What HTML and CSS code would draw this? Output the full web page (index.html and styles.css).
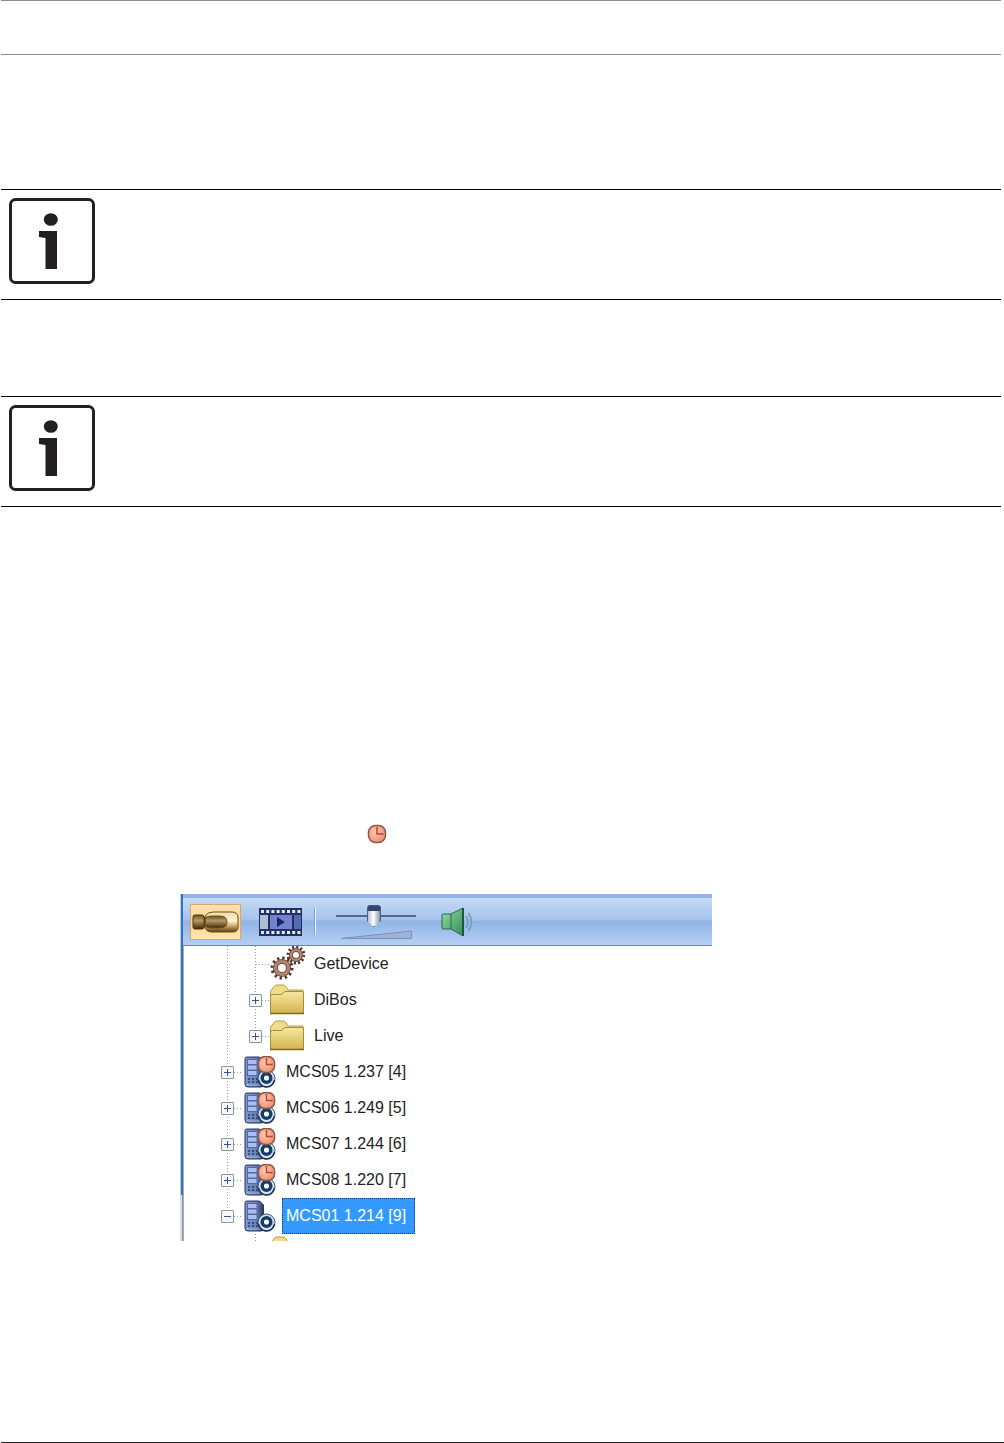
FILE: index.html
```html
<!DOCTYPE html>
<html lang="en">
<head>
    <meta charset="UTF-8">
    <meta name="viewport" content="width=device-width, initial-scale=1.0">
    <title>Device Tree</title>
<link rel="stylesheet" href="styles.css">
</head>
<body>

<!-- shared icons -->
<svg class="defs" width="0" height="0" aria-hidden="true">
    <defs>
        <linearGradient id="gold" x1="0" y1="0" x2="0" y2="1">
            <stop offset="0" stop-color="#f3dda6"/><stop offset=".45" stop-color="#fff3cf"/><stop offset=".7" stop-color="#c9a868"/><stop offset="1" stop-color="#5b3d10"/>
        </linearGradient>
        <linearGradient id="bronze" x1="0" y1="0" x2="0" y2="1">
            <stop offset="0" stop-color="#6d5126"/><stop offset=".4" stop-color="#b59a66"/><stop offset="1" stop-color="#3f2808"/>
        </linearGradient>
        <linearGradient id="yellow" x1="0" y1="0" x2="0" y2="1">
            <stop offset="0" stop-color="#f7e8a0"/><stop offset="1" stop-color="#d2b34e"/>
        </linearGradient>
        <linearGradient id="steel" x1="0" y1="0" x2="1" y2="0">
            <stop offset="0" stop-color="#8099cd"/><stop offset=".6" stop-color="#6b80b5"/><stop offset="1" stop-color="#26375f"/>
        </linearGradient>
        <linearGradient id="green" x1="0" y1="0" x2="1" y2="1">
            <stop offset="0" stop-color="#8fe0a3"/><stop offset="1" stop-color="#38885a"/>
        </linearGradient>
        <radialGradient id="red" cx=".4" cy=".4" r=".7">
            <stop offset="0" stop-color="#ffc9b2"/><stop offset="1" stop-color="#e58a6c"/>
        </radialGradient>
    </defs>
    <symbol id="info" viewBox="0 0 86 86">
        <rect x="1.5" y="1.5" width="83" height="83" rx="5" fill="#fff" stroke="#231f20" stroke-width="3"/>
        <ellipse cx="41.800" cy="21.500" rx="7" ry="6.300" fill="#231f20"/>
        <path d="M30 33h18v38H36.500V40L30 39z" fill="#231f20"/>
    </symbol>
    <symbol id="folder" viewBox="0 0 36 32">
        <path d="M1.500 29V7l4-5q1-1 2.500-1h6q2 0 3 2l2 3h14q1.500 0 1.500 1.500V29z" fill="#eedb8c" stroke="#b69c49"/>
        <path d="M1.500 29.500V12.500q0-2 2-2h9l3.500-3h17q1.500 0 1.500 1.500v20.500z" fill="url(#yellow)" stroke="#a88c39"/>
        <path d="M1 29.500h34" stroke="#7f6726" stroke-width="1.500"/>
    </symbol>
    <symbol id="clock" viewBox="0 0 20 20">
        <rect x="1.500" y="1.500" width="17" height="17" rx="7" fill="url(#red)" stroke="#8f5846" stroke-width="1.500"/>
        <path d="M10 3V10h6.500" fill="none" stroke="#c0402a" stroke-width="1.500"/>
    </symbol>
    <symbol id="server" viewBox="0 0 32 32">
        <path d="M1 28V3q0-2 2-2h12.500l4 4v24q-.5 2-2.500 2H4q-3 0-3-3z" fill="url(#steel)" stroke="#26355c"/>
        <path d="M3 3h10.500v17H3z" fill="#536aa6"/>
        <path d="M4 4h8.500v4H4zm0 5.500h8.500v4H4zm0 5.500h8.500v4H4z" fill="#aabff0"/>
        <path d="M4 23h2m2 0h2m2 0h2M4 26h2m2 0h2m2 0h2" stroke="#263b73" stroke-width="1.500"/>
        <path d="M2 29h15" stroke="#a4b9e6"/>
        <circle cx="22.500" cy="22.500" r="8.500" fill="#d4e0ec" stroke="#34506e"/>
        <path d="M14.500 24q2 7 8 7t8-7" fill="none" stroke="#1d3450" stroke-width="1.500"/>
        <circle cx="22.500" cy="22" r="4.300" fill="#fff" stroke="#173d67" stroke-width="3.500"/>
    </symbol>
    <symbol id="server-clock" viewBox="0 0 32 32">
        <use href="#server" width="32" height="32"/>
        <use href="#clock" x="13" y="-1" width="19" height="19"/>
    </symbol>
    <symbol id="gears" viewBox="0 0 36 36">
        <circle cx="13" cy="22" r="10" fill="none" stroke="#4a2e25" stroke-width="3" stroke-dasharray="2.300 2.930"/>
        <circle cx="13" cy="22" r="6.500" fill="none" stroke="#71493b" stroke-width="5"/>
        <circle cx="13" cy="22" r="6.500" fill="none" stroke="#b08673" stroke-width="3"/>
        <circle cx="27" cy="9" r="8" fill="none" stroke="#4a2e25" stroke-width="3" stroke-dasharray="2 2.190"/>
        <circle cx="27" cy="9" r="5" fill="none" stroke="#71493b" stroke-width="4"/>
        <circle cx="27" cy="9" r="5" fill="none" stroke="#b88f7d" stroke-width="2"/>
    </symbol>
</svg>

<header></header>

<main>
    <section class="note"><svg class="infoIcon" role="img" aria-label="Information"><use href="#info"/></svg></section>
    <section class="note"><svg class="infoIcon" role="img" aria-label="Information"><use href="#info"/></svg></section>

    <p class="clockLine"><svg class="clockIcon" role="img" aria-label="Clock"><use href="#clock"/></svg></p>

    <div class="panel">
        <div class="toolbar">
            <button type="button" class="tool active" aria-label="Live mode">
                <svg width="47" height="24" viewBox="0 0 47 24">
                    <path d="M13 6q3-4 8-4h19q6 0 6 6v9q0 5-5 5H19q-4 0-6-4z" fill="url(#gold)" stroke="#6e4c18"/>
                    <path d="M13 8q2-2 6-2h9q7 0 7 6t-7 6h-9q-4 0-6-2z" fill="url(#bronze)" stroke="#6d5126"/>
                    <path d="M10 7h4v10h-4z" fill="#715121"/>
                    <rect x="1" y="5" width="11" height="14" rx="2" fill="url(#bronze)" stroke="#4e350e"/>
                </svg>
            </button>
            <button type="button" class="tool" aria-label="Playback mode">
                <svg width="43" height="28" viewBox="0 0 43 28">
                    <path d="M0 0h43v28H0z" fill="#24305f"/>
                    <path d="M2 3.500h40M2 24.500h40" stroke="#e1eafb" stroke-width="3" stroke-dasharray="3 2.200"/>
                    <path d="M1 7h8v14H1z" fill="#aebed9"/>
                    <path d="M11 7h22v14H11z" fill="#7382d0"/>
                    <path d="M35 7h7v14h-7z" fill="#5969b2"/>
                    <path d="M18 9l8 5-8 5z" fill="#182763"/>
                </svg>
            </button>
            <span class="separator"></span>
            <div class="sensitivity">
                <input type="range" min="0" max="100" value="47" aria-label="Sensitivity">
                <svg width="72" height="9" viewBox="0 0 72 9"><path d="M1 8.500L71.500 1v7.500z" fill="#9cb2d9" stroke="#7c92b9"/></svg>
            </div>
            <button type="button" class="tool" aria-label="Audio">
                <svg width="32" height="30" viewBox="0 0 32 30">
                    <path d="M1 8q0-1 1-1h8L22 1v28L10 22H2q-1 0-1-1z" fill="url(#green)" stroke="#286b46"/>
                    <path d="M10 7v15" stroke="#286b46"/>
                    <path d="M22 1v28" stroke="#1f553a" stroke-width="2"/>
                    <path d="M25 9q4 6 0 12M27.500 6q6 9 0 18" fill="none" stroke="#789bb4" stroke-width="1.500"/>
                </svg>
            </button>
        </div>

        <ul class="tree">
            <li><span class="guide"></span><span class="guide branch"></span><svg class="icon"><use href="#gears"/></svg><span class="label">GetDevice</span></li>
            <li><span class="guide"></span><span class="guide branch"><button type="button" class="expand" aria-label="Expand DiBos"></button></span><svg class="icon"><use href="#folder" y="2" height="32"/></svg><span class="label">DiBos</span></li>
            <li><span class="guide"></span><span class="guide branch last"><button type="button" class="expand" aria-label="Expand Live"></button></span><svg class="icon"><use href="#folder" y="2" height="32"/></svg><span class="label">Live</span></li>
            <li><span class="guide branch"><button type="button" class="expand" aria-label="Expand MCS05"></button></span><svg class="icon server"><use href="#server-clock"/></svg><span class="label">MCS05 1.237 [4]</span></li>
            <li><span class="guide branch"><button type="button" class="expand" aria-label="Expand MCS06"></button></span><svg class="icon server"><use href="#server-clock"/></svg><span class="label">MCS06 1.249 [5]</span></li>
            <li><span class="guide branch"><button type="button" class="expand" aria-label="Expand MCS07"></button></span><svg class="icon server"><use href="#server-clock"/></svg><span class="label">MCS07 1.244 [6]</span></li>
            <li><span class="guide branch"><button type="button" class="expand" aria-label="Expand MCS08"></button></span><svg class="icon server"><use href="#server-clock"/></svg><span class="label">MCS08 1.220 [7]</span></li>
            <li><span class="guide branch last"><button type="button" class="expand open" aria-label="Collapse MCS01"></button></span><svg class="icon server"><use href="#server"/></svg><span class="label selected">MCS01 1.214 [9]</span></li>
            <li><span class="guide blank"></span><span class="guide"></span><svg class="icon"><use href="#folder" y="2" height="32"/></svg></li>
        </ul>
    </div>
</main>

<footer></footer>

</body>
</html>
```

FILE: styles.css
```css
*{
    box-sizing: border-box;
}
body{
    margin: 0;
    padding-left: 1px;
    min-height: 100vh;
    display: flex;
    flex-direction: column;
    background-color: #fff;
    font-family: "Liberation Sans", Arial, sans-serif;
    font-size: 16px;
    color: #222;
}
svg{
    display: block;
    flex: none;
}
button{
    padding: 0;
    border: none;
    background: none;
}
.defs{
    position: absolute;
}
header{
    height: 55px;
    margin-right: 3px;
    border-top: 1px solid #8c8c8c;
    border-bottom: 1px solid #8c8c8c;
}
main{
    margin-right: 3px;
    padding-top: 134px;
}
footer{
    margin-top: auto;
    border-top: 1px solid #222;
}
.note{
    padding: 8px;
    min-height: 111px;
    margin-bottom: 96px;
    border-top: 1px solid #000;
    border-bottom: 1px solid #000;
}
.infoIcon{
    width: 86px;
    height: 86px;
}
.clockLine{
    margin: 317px 0 50px 366px;
}
.clockIcon{
    width: 20px;
    height: 20px;
}
.panel{
    width: 532px;
    max-width: calc(100% - 179px);
    margin-left: 179px;
    padding-left: 3px;
    background: linear-gradient(to right, #b4cdf0 1px, #3c6fb3 1px) left top / 3px 301px no-repeat,
        linear-gradient(to right, #d8dce4 2px, #8795a8 2px) left top / 3px 100% no-repeat;
}
.toolbar{
    display: flex;
    align-items: center;
    height: 52px;
    padding-left: 7px;
    border-top: 4px solid #94b5e7;
    border-bottom: 1px solid #74849f;
    background: linear-gradient(#c6dbf5, #a5c3ec 45%, #92b4e5 50%, #b4cff5);
}
.tool.active{
    padding: 5px 1px;
    border: 1px solid #dca964;
    background: linear-gradient(#fee3b5, #fbd18e 50%, #ffe6b1);
    margin-right: 18px;
}
.separator{
    width: 2px;
    height: 27px;
    margin: 0 20px 0 12px;
    background: linear-gradient(to right, #7fa0d3 1px, #f4f9ff 1px);
}
.sensitivity{
    width: 80px;
    margin-right: 25px;
}
.sensitivity svg{
    margin: 2px 0 0 4px;
}
input[type="range"]{
    appearance: none;
    display: block;
    width: 100%;
    height: 24px;
    margin: 0;
    background: linear-gradient(#53668b, #53668b) center / 100% 2px no-repeat;
}
input[type="range"]::-webkit-slider-thumb{
    appearance: none;
    width: 14px;
    height: 22px;
    border: 1px solid #4b5c7c;
    background: linear-gradient(#33456b 5px, transparent 5px), linear-gradient(to right, #b5bfd0, #fff 45%, #8796b2);
    clip-path: polygon(0 2px, 2px 0, 12px 0, 100% 2px, 100% 16px, 50% 100%, 0 16px);
}
.tree{
    height: 295px;
    margin: 0;
    padding: 0;
    overflow: hidden;
    list-style: none;
    background-color: #fff;
    border-left: 1px solid #a2acba;
}
.tree li{
    display: flex;
    align-items: center;
    height: 36px;
    padding-left: 29px;
}
/* dotted connector lines */
.guide{
    display: flex;
    align-items: center;
    justify-content: center;
    width: 29px;
    height: 36px;
    margin-right: -1px;
    background: repeating-linear-gradient(#999 0 1px, #fff 1px 3px) center top / 1px 100% no-repeat;
}
.guide.branch{
    background: repeating-linear-gradient(#999 0 1px, #fff 1px 3px) center top / 1px 100% no-repeat,
        repeating-linear-gradient(to right, #999 0 1px, #fff 1px 3px) right center / 14px 1px no-repeat;
}
.guide.branch.last{
    background-size: 1px 50%, 14px 1px;
}
.guide.blank{
    background: none;
}
.expand{
    width: 13px;
    height: 13px;
    border: 1px solid #8f959f;
    border-radius: 1px;
    background: linear-gradient(#35568f, #35568f) center / 7px 1px no-repeat,
        linear-gradient(#35568f, #35568f) center / 1px 7px no-repeat,
        #f6f7f9;
}
.expand.open{
    background: linear-gradient(#35568f, #35568f) center / 7px 1px no-repeat, #f6f7f9;
}
.icon{
    width: 36px;
    height: 36px;
}
.icon.server{
    width: 32px;
    height: 32px;
    margin: 0 1px 0 3px;
}
.label{
    margin-left: 5px;
    padding: 0 4px;
    line-height: 36px;
    white-space: nowrap;
}
.label.selected{
    padding: 0 8px 0 3px;
    border: 1px dotted #123a6c;
    line-height: 34px;
    color: #fff;
    background-color: #3399ff;
}
```
